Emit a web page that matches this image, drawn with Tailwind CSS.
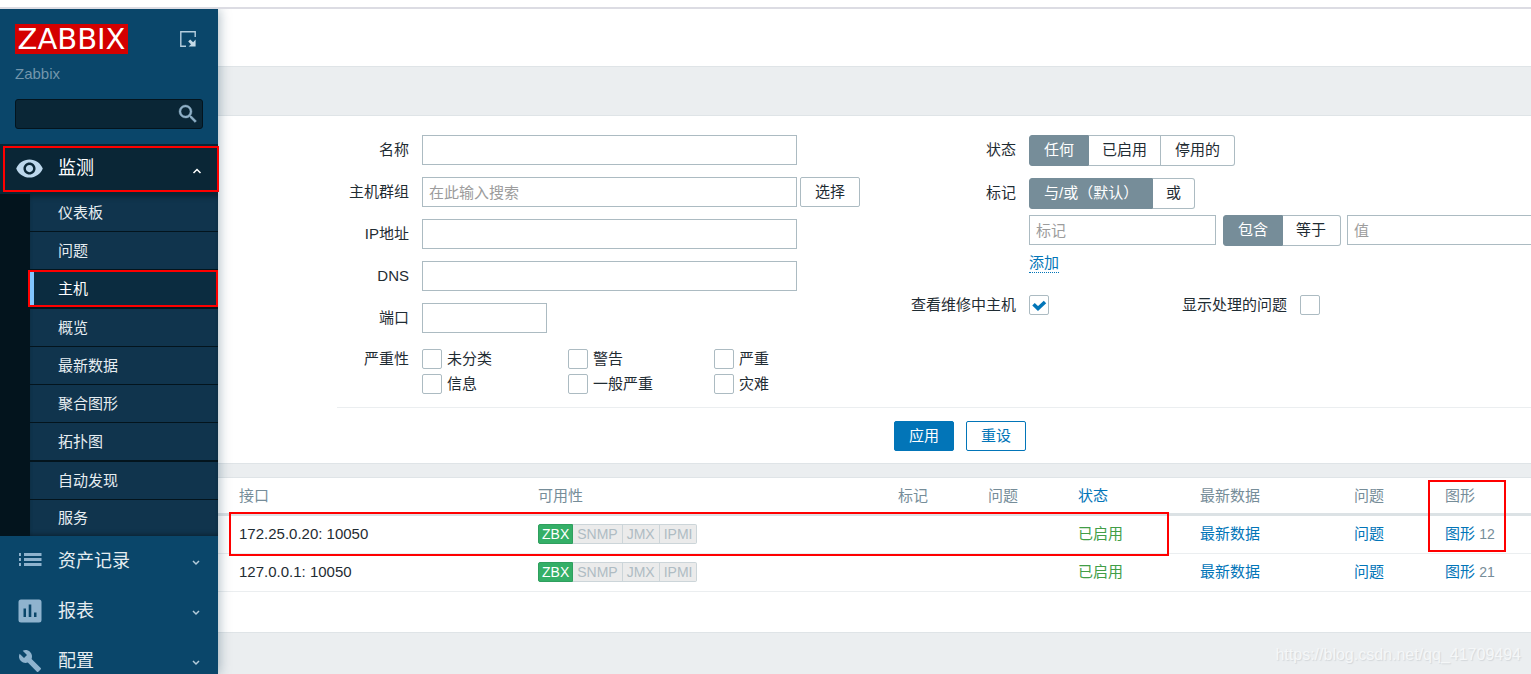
<!DOCTYPE html>
<html lang="zh-CN">
<head>
<meta charset="utf-8">
<title>Zabbix</title>
<script src="https://cdn.jsdelivr.net/npm/@tailwindcss/browser@4"></script>
</head>
<body class="flex h-screen flex-col overflow-hidden bg-[#ebeef0] font-['Liberation_Sans','Noto_Sans_CJK_SC',sans-serif] text-[15px] leading-5 text-[#1f2c33]">
<div class="h-[9px] shrink-0 border-b-2 border-[#dcdce3] bg-white"></div>
<div class="flex min-h-0 flex-1">

  <!-- Sidebar -->
  <aside class="relative z-10 w-[218px] shrink-0 bg-[#0a466a] shadow-[0_0_12px_rgba(10,50,75,0.4)] [clip-path:inset(0_-20px_0_0)]">
    <div class="h-[135px] px-[15px] pt-[15px]">
      <div class="flex items-center justify-between pr-[7px]">
        <a href="#" class="flex h-[30px] w-[113px] items-center justify-center bg-[#d40000] font-['DejaVu_Sans',sans-serif] text-[29px] leading-[30px] text-white">ZABBIX</a>
        <button type="button" aria-label="收起侧边栏">
          <svg class="block h-4 w-4" viewBox="0 0 16 16" fill="none" stroke="#b5cede" stroke-width="1.400"><path d="M6 15.200H.8V.8h14.400V6"/><path d="M15.600 8.500v7h-7l2.400-2.300-2.800-2.800 2-2 2.900 2.800z" fill="#c5dbe8" stroke="none"/></svg>
        </button>
      </div>
      <div class="mt-[10px] text-[#7396ac]">Zabbix</div>
      <div class="relative mt-[15px]">
        <input type="text" aria-label="搜索" class="block h-[30px] w-full rounded-[3px] border border-[#03141e] bg-[#0a2636] px-2 text-white outline-none">
        <button type="button" aria-label="搜索" class="absolute top-[3px] right-[3px]"><svg class="block h-6 w-6" viewBox="0 0 24 24" fill="#8fb0c7" stroke="#8fb0c7" stroke-width=".4"><path d="M15.500 14h-.79l-.28-.27A6.470 6.470 0 0 0 16 9.500 6.500 6.500 0 1 0 9.500 16c1.610 0 3.090-.59 4.230-1.570l.27.28v.79l5 4.990L20.490 19l-4.990-5zm-6 0C7.010 14 5 11.990 5 9.500S7.010 5 9.500 5 14 7.010 14 9.500 11.990 14 9.500 14z"/></svg></button>
      </div>
    </div>
    <nav class="text-[18px] text-[#e6edf1]">
      <a href="#" class="relative flex h-[50px] items-center bg-[#0a2636] pr-4 pb-0.5 pl-[15px] text-white">
        <svg class="h-[29px] w-[29px]" viewBox="0 0 24 24" fill="#bcd7ec"><path d="M12 4.500C7 4.500 2.730 7.610 1 12c1.730 4.390 6 7.500 11 7.500s9.270-3.110 11-7.500c-1.730-4.390-6-7.500-11-7.500zM12 17c-2.760 0-5-2.240-5-5s2.240-5 5-5 5 2.240 5 5-2.240 5-5 5zm0-8c-1.660 0-3 1.340-3 3s1.340 3 3 3 3-1.340 3-3-1.340-3-3-3z"/></svg>
        <span class="ml-[14px] flex-1">监测</span>
        <svg class="mt-1.5 h-[10px] w-[10px]" viewBox="0 0 10 10" fill="none" stroke="#fff" stroke-width="1.500"><path d="M1.500 7 5 3.500 8.500 7"/></svg>
        <span class="pointer-events-none absolute top-[2px] -right-px bottom-[2px] left-[3px] z-10 border-2 border-[#ff0000]"></span>
      </a>
      <ul class="h-[342px] border-l-[30px] border-[#03141d] bg-[#10344d] text-[15px] shadow-[inset_0_6px_6px_-4px_rgba(0,0,0,0.4),inset_0_-4px_5px_-3px_rgba(0,0,0,0.4)]">
        <li><a href="#" class="flex h-[38px] items-center border-b border-[#03141d] pl-[28px]">仪表板</a></li>
        <li><a href="#" class="flex h-[38px] items-center border-b border-[#03141d] pl-[28px]">问题</a></li>
        <li class="relative"><a href="#" class="flex h-[39px] items-center border-b-2 border-[#03141d] bg-[#0b2c40] pl-[28px] text-white shadow-[inset_4px_0_0_#82c6ff]">主机</a>
          <span class="pointer-events-none absolute top-0 right-0 bottom-[2px] -left-[2px] border-2 border-[#ff0000]"></span></li>
        <li><a href="#" class="flex h-[38px] items-center border-b border-[#03141d] pl-[28px]">概览</a></li>
        <li><a href="#" class="flex h-[38px] items-center border-b border-[#03141d] pl-[28px]">最新数据</a></li>
        <li><a href="#" class="flex h-[38px] items-center border-b border-[#03141d] pl-[28px]">聚合图形</a></li>
        <li><a href="#" class="flex h-[39px] items-center border-b-2 border-[#03141d] pl-[28px]">拓扑图</a></li>
        <li><a href="#" class="flex h-[38px] items-center border-b border-[#03141d] pl-[28px]">自动发现</a></li>
        <li><a href="#" class="flex h-9 items-center pl-[28px]">服务</a></li>
      </ul>
      <a href="#" class="flex h-[50px] items-center pr-[17px] pl-[18px]">
        <svg class="h-6 w-6" viewBox="0 0 24 24" fill="#8fb3ce"><path d="M1 4h2v3H1zM6 4h17.500v3H6zM1 9h2v3H1zM6 9h17.500v3H6zM1 14h2v3H1zM6 14h17.500v3H6z"/></svg>
        <span class="ml-4 flex-1">资产记录</span>
        <svg class="mt-1 h-[10px] w-[10px]" viewBox="0 0 10 10" fill="none" stroke="#b4cbda" stroke-width="1.500"><path d="M2 3 5 6 8 3"/></svg>
      </a>
      <a href="#" class="flex h-[50px] items-center pr-[17px] pl-[18px]">
        <svg class="h-6 w-6" viewBox="0 0 24 24" fill="#8fb3ce"><path fill-rule="evenodd" d="M3 .5h18A2.500 2.500 0 0 1 23.500 3v18a2.500 2.500 0 0 1-2.500 2.500H3A2.500 2.500 0 0 1 .5 21V3A2.500 2.500 0 0 1 3 .5zM5.500 9.500v8.500H8V9.500zM10.700 5.500V18h2.600V5.500zM16 13.500V18h2.500v-4.500z"/></svg>
        <span class="ml-4 flex-1">报表</span>
        <svg class="mt-1 h-[10px] w-[10px]" viewBox="0 0 10 10" fill="none" stroke="#b4cbda" stroke-width="1.500"><path d="M2 3 5 6 8 3"/></svg>
      </a>
      <a href="#" class="flex h-[50px] items-center pr-[17px] pl-[18px]">
        <svg class="h-6 w-6" viewBox="0 0 24 24" fill="#8fb3ce"><path d="M22.700 19l-9.100-9.100c.9-2.300.4-5-1.500-6.900-2-2-5-2.400-7.400-1.300L9 6 6 9 1.600 4.700C.4 7.100.9 10.100 2.900 12.100c1.900 1.900 4.600 2.400 6.900 1.500l9.100 9.100c.4.4 1 .4 1.400 0l2.300-2.300c.5-.4.5-1.100.1-1.400z"/></svg>
        <span class="ml-4 flex-1">配置</span>
        <svg class="mt-1 h-[10px] w-[10px]" viewBox="0 0 10 10" fill="none" stroke="#b4cbda" stroke-width="1.500"><path d="M2 3 5 6 8 3"/></svg>
      </a>
    </nav>
  </aside>

  <!-- Content -->
  <main class="relative min-w-0 flex-1 overflow-hidden">
    <header class="h-[58px] border-b border-[#dfe4e7] bg-white"></header>
    <div class="h-12"></div>

    <form class="h-[349px] overflow-hidden border-y border-[#dfe4e7] bg-white pt-[19px] pl-[119px]">
      <div class="w-[1246px]">
        <div class="flex h-[273px] border-b border-[#ebeef0]">
          <!-- Left column -->
          <div class="flex w-[573px] shrink-0 flex-col gap-3">
            <div class="flex items-center gap-[13px]"><label for="name" class="w-[72px] text-right">名称</label><input id="name" type="text" class="h-[30px] w-[375px] border border-[#acbbc2] px-1.5 outline-none"></div>
            <div class="flex items-center"><label for="groups" class="mr-[13px] w-[72px] text-right">主机群组</label><input id="groups" type="text" placeholder="在此输入搜索" class="h-[30px] w-[375px] border border-[#acbbc2] px-1.5 outline-none placeholder:text-[#9c9c9c]"><button type="button" class="ml-[3px] h-[30px] w-[60px] rounded-[2px] border border-[#acbbc2]">选择</button></div>
            <div class="flex items-center gap-[13px]"><label for="ip" class="w-[72px] text-right">IP地址</label><input id="ip" type="text" class="h-[30px] w-[375px] border border-[#acbbc2] px-1.5 outline-none"></div>
            <div class="flex items-center gap-[13px]"><label for="dns" class="w-[72px] text-right">DNS</label><input id="dns" type="text" class="h-[30px] w-[375px] border border-[#acbbc2] px-1.5 outline-none"></div>
            <div class="flex items-center gap-[13px]"><label for="port" class="w-[72px] text-right">端口</label><input id="port" type="text" class="h-[30px] w-[125px] border border-[#acbbc2] px-1.5 outline-none"></div>
            <div class="flex gap-[13px] pt-1" role="group" aria-labelledby="sev">
              <span id="sev" class="w-[72px] text-right">严重性</span>
              <div class="grid grid-cols-[146px_146px_146px] gap-y-[5px]">
                <label class="flex items-center gap-[5px]"><input type="checkbox" class="h-5 w-5 appearance-none rounded-[2px] border border-[#acbbc2]">未分类</label>
                <label class="flex items-center gap-[5px]"><input type="checkbox" class="h-5 w-5 appearance-none rounded-[2px] border border-[#acbbc2]">警告</label>
                <label class="flex items-center gap-[5px]"><input type="checkbox" class="h-5 w-5 appearance-none rounded-[2px] border border-[#acbbc2]">严重</label>
                <label class="flex items-center gap-[5px]"><input type="checkbox" class="h-5 w-5 appearance-none rounded-[2px] border border-[#acbbc2]">信息</label>
                <label class="flex items-center gap-[5px]"><input type="checkbox" class="h-5 w-5 appearance-none rounded-[2px] border border-[#acbbc2]">一般严重</label>
                <label class="flex items-center gap-[5px]"><input type="checkbox" class="h-5 w-5 appearance-none rounded-[2px] border border-[#acbbc2]">灾难</label>
              </div>
            </div>
          </div>
          <!-- Right column -->
          <div class="min-w-0 flex-1">
            <div class="flex items-center gap-[13px]">
              <span class="w-[106px] pb-0.5 text-right">状态</span>
              <div class="flex">
                <button type="button" class="h-[31px] rounded-l-[3px] border border-[#768d99] bg-[#768d99] px-[14px] pb-0.5 text-white">任何</button>
                <button type="button" class="h-[31px] border-y border-r border-[#acbbc2] px-[13px] pb-0.5">已启用</button>
                <button type="button" class="h-[31px] rounded-r-[3px] border-y border-r border-[#acbbc2] px-[14px] pb-0.5">停用的</button>
              </div>
            </div>
            <div class="mt-3 flex items-center gap-[13px]">
              <span class="w-[106px] pb-0.5 text-right">标记</span>
              <div class="flex">
                <button type="button" class="h-[31px] w-[124px] rounded-l-[3px] border border-[#768d99] bg-[#768d99] pb-0.5 pl-[14px] text-left whitespace-nowrap text-white">与/或（默认）</button>
                <button type="button" class="h-[31px] rounded-r-[3px] border-y border-r border-[#acbbc2] px-[13px] pb-0.5">或</button>
              </div>
            </div>
            <div class="mt-1.5 ml-[119px] flex items-start">
              <input type="text" aria-label="标记" placeholder="标记" class="h-[30px] w-[187px] border border-[#acbbc2] px-1.5 outline-none placeholder:text-[#9c9c9c]">
              <div class="ml-[7px] flex">
                <button type="button" class="h-[31px] rounded-l-[3px] border border-[#768d99] bg-[#768d99] px-[14px] pb-0.5 whitespace-nowrap text-white">包含</button>
                <button type="button" class="h-[31px] rounded-r-[3px] border-y border-r border-[#acbbc2] pr-[14px] pb-0.5 pl-[13px] whitespace-nowrap">等于</button>
              </div>
              <input type="text" aria-label="值" placeholder="值" class="ml-1.5 h-[30px] w-[187px] shrink-0 border border-[#acbbc2] px-1.5 outline-none placeholder:text-[#9c9c9c]">
            </div>
            <div class="mt-[7px] ml-[119px] flex"><button type="button" class="h-5 border-b border-dotted border-[#0275b8] leading-[19px] text-[#0275b8]">添加</button></div>
            <div class="mt-[22px] flex items-center">
              <label for="maint" class="mr-[13px] w-[106px] text-right">查看维修中主机</label>
              <span class="relative h-5 w-5"><input id="maint" type="checkbox" checked class="block h-5 w-5 appearance-none rounded-[2px] border border-[#acbbc2]"><svg class="pointer-events-none absolute inset-0 h-5 w-5" viewBox="0 0 20 20" fill="none" stroke="#0275b8" stroke-width="3.600"><path d="M4.500 9.200 9 13.500 16 7"/></svg></span>
              <label for="supp" class="mr-[13px] ml-[132px] w-[106px] text-right">显示处理的问题</label>
              <input id="supp" type="checkbox" class="h-5 w-5 appearance-none rounded-[2px] border border-[#acbbc2]">
            </div>
          </div>
        </div>
        <div class="flex justify-center gap-3 pt-[13px]">
          <button type="submit" class="h-[30px] w-[60px] rounded-[2px] border border-[#0275b8] bg-[#0275b8] text-white">应用</button>
          <button type="reset" class="h-[30px] w-[60px] rounded-[2px] border border-[#0275b8] text-[#0275b8]">重设</button>
        </div>
      </div>
    </form>

    <section class="relative mt-[13px] h-[156px] border-y border-[#dfe4e7] bg-white">
      <table class="w-full table-fixed border-separate border-spacing-0 text-left whitespace-nowrap [&_td]:border-b [&_td]:border-[#ebeef0] [&_td]:pb-0.5 [&_th]:border-b-3 [&_th]:border-[#dce2e5] [&_th]:font-normal">
        <colgroup><col class="w-[320px]"><col class="w-[360px]"><col class="w-[90px]"><col class="w-[90px]"><col class="w-[122px]"><col class="w-[154px]"><col class="w-[91px]"><col></colgroup>
        <thead>
          <tr class="h-[38px] text-[#768d99]">
            <th class="pl-[21px]">接口</th><th>可用性</th><th>标记</th><th>问题</th><th><a href="#" class="text-[#0275b8]">状态</a></th><th>最新数据</th><th>问题</th><th>图形</th>
          </tr>
        </thead>
        <tbody>
          <tr class="h-[38px]">
            <td class="pl-[21px]">172.25.0.20: 10050</td>
            <td><div class="flex text-[14px] leading-[18px] text-[#afbcc3]"><span class="rounded-l-[2px] border border-[#2f9f5e] bg-[#34af67] px-[3px] text-white">ZBX</span><span class="border-y border-r border-[#ccd5d9] bg-[#ebebeb] px-1">SNMP</span><span class="border-y border-r border-[#ccd5d9] bg-[#ebebeb] px-1">JMX</span><span class="rounded-r-[2px] border-y border-r border-[#ccd5d9] bg-[#ebebeb] px-1">IPMI</span></div></td>
            <td></td><td></td>
            <td><a href="#" class="text-[#429e47]">已启用</a></td>
            <td><a href="#" class="text-[#0275b8]">最新数据</a></td>
            <td><a href="#" class="text-[#0275b8]">问题</a></td>
            <td><a href="#" class="text-[#0275b8]">图形</a> <span class="text-[14px] text-[#768d99]">12</span></td>
          </tr>
          <tr class="h-[38px]">
            <td class="pl-[21px]">127.0.0.1: 10050</td>
            <td><div class="flex text-[14px] leading-[18px] text-[#afbcc3]"><span class="rounded-l-[2px] border border-[#2f9f5e] bg-[#34af67] px-[3px] text-white">ZBX</span><span class="border-y border-r border-[#ccd5d9] bg-[#ebebeb] px-1">SNMP</span><span class="border-y border-r border-[#ccd5d9] bg-[#ebebeb] px-1">JMX</span><span class="rounded-r-[2px] border-y border-r border-[#ccd5d9] bg-[#ebebeb] px-1">IPMI</span></div></td>
            <td></td><td></td>
            <td><a href="#" class="text-[#429e47]">已启用</a></td>
            <td><a href="#" class="text-[#0275b8]">最新数据</a></td>
            <td><a href="#" class="text-[#0275b8]">问题</a></td>
            <td><a href="#" class="text-[#0275b8]">图形</a> <span class="text-[14px] text-[#768d99]">21</span></td>
          </tr>
        </tbody>
      </table>
      <!-- Highlight frames over the table -->
      <span class="pointer-events-none absolute top-[34px] left-[11px] h-[44px] w-[940px] border-2 border-[#ff0000]"></span>
      <span class="pointer-events-none absolute top-[2px] left-[1210px] h-[72px] w-[78px] border-2 border-[#ff0000]"></span>
    </section>

    <div class="absolute right-[10px] bottom-[9px] text-[16px] text-[#f5f7f8] [text-shadow:1px_1px_1px_#d3d7da]">https://blog.csdn.net/qq_41709494</div>
  </main>
</div>
</body>
</html>
